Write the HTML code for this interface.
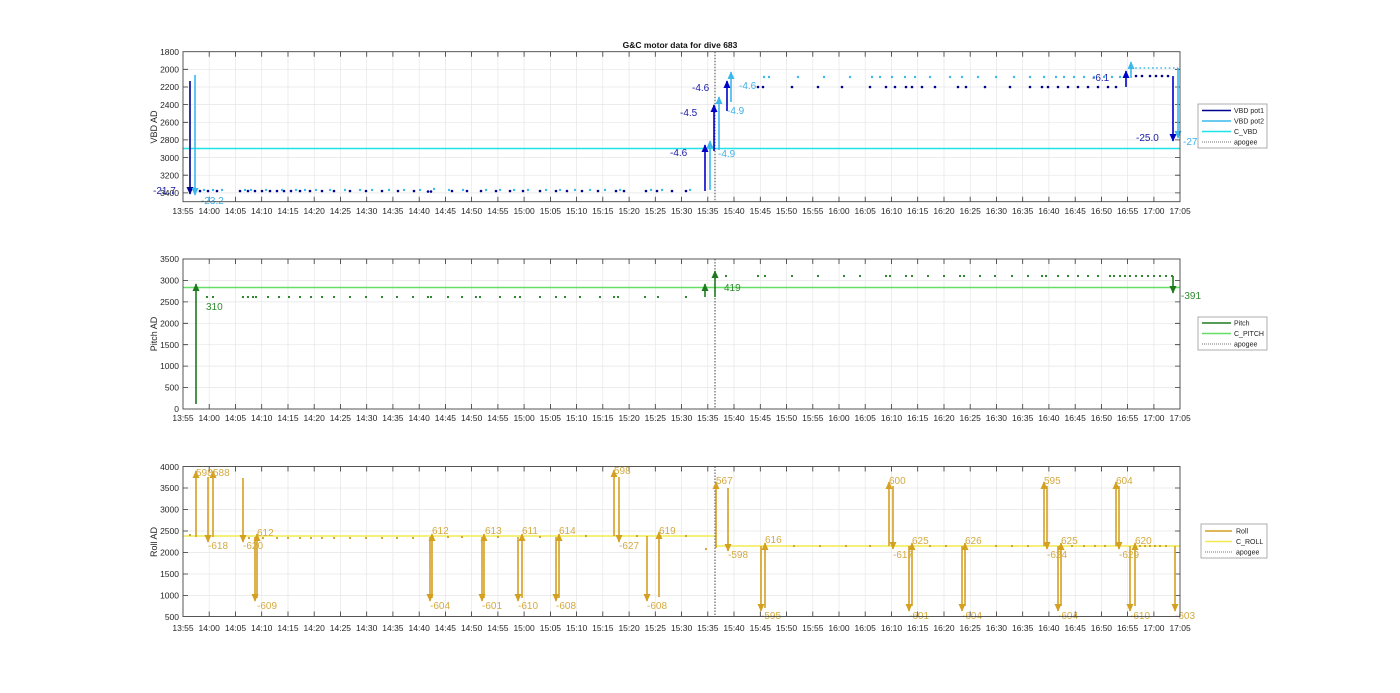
<!DOCTYPE html>
<html><head><meta charset="utf-8"><style>
html,body{margin:0;padding:0;background:#fff;width:1400px;height:693px;overflow:hidden}
svg{display:block;font-family:"Liberation Sans",sans-serif}
</style></head><body>
<svg width="1400" height="693" viewBox="0 0 1400 693" xmlns="http://www.w3.org/2000/svg">
<defs>
<marker id="mb" viewBox="0 0 10 10" refX="9" refY="5" markerWidth="5" markerHeight="4.5" orient="auto" preserveAspectRatio="none"><path d="M0 0L10 5L0 10z" fill="#0000c8"/></marker>
<marker id="mk" viewBox="0 0 10 10" refX="9" refY="5" markerWidth="5" markerHeight="4.5" orient="auto" preserveAspectRatio="none"><path d="M0 0L10 5L0 10z" fill="#000090"/></marker>
<marker id="ml" viewBox="0 0 10 10" refX="9" refY="5" markerWidth="5" markerHeight="4.5" orient="auto" preserveAspectRatio="none"><path d="M0 0L10 5L0 10z" fill="#3ab8ec"/></marker>
<marker id="mg" viewBox="0 0 10 10" refX="9" refY="5" markerWidth="5" markerHeight="4.5" orient="auto" preserveAspectRatio="none"><path d="M0 0L10 5L0 10z" fill="#1e7a1e"/></marker>
<marker id="my" viewBox="0 0 10 10" refX="9" refY="5" markerWidth="5" markerHeight="4.5" orient="auto" preserveAspectRatio="none"><path d="M0 0L10 5L0 10z" fill="#d4a020"/></marker>
<g id="vg"><path d="M209.2 0v150M235.5 0v150M261.7 0v150M288 0v150M314.2 0v150M340.4 0v150M366.7 0v150M392.9 0v150M419.2 0v150M445.4 0v150M471.6 0v150M497.9 0v150M524.1 0v150M550.4 0v150M576.6 0v150M602.8 0v150M629.1 0v150M655.3 0v150M681.6 0v150M707.8 0v150M734 0v150M760.3 0v150M786.5 0v150M812.8 0v150M839 0v150M865.2 0v150M891.5 0v150M917.7 0v150M944 0v150M970.2 0v150M996.4 0v150M1022.7 0v150M1048.9 0v150M1075.2 0v150M1101.4 0v150M1127.6 0v150M1153.9 0v150" stroke="#e6e6e6" stroke-width="0.7"/>
<path d="M209.2 0v5M235.5 0v5M261.7 0v5M288 0v5M314.2 0v5M340.4 0v5M366.7 0v5M392.9 0v5M419.2 0v5M445.4 0v5M471.6 0v5M497.9 0v5M524.1 0v5M550.4 0v5M576.6 0v5M602.8 0v5M629.1 0v5M655.3 0v5M681.6 0v5M707.8 0v5M734 0v5M760.3 0v5M786.5 0v5M812.8 0v5M839 0v5M865.2 0v5M891.5 0v5M917.7 0v5M944 0v5M970.2 0v5M996.4 0v5M1022.7 0v5M1048.9 0v5M1075.2 0v5M1101.4 0v5M1127.6 0v5M1153.9 0v5" stroke="#333" stroke-width="0.8"/>
<path d="M209.2 150v-5M235.5 150v-5M261.7 150v-5M288 150v-5M314.2 150v-5M340.4 150v-5M366.7 150v-5M392.9 150v-5M419.2 150v-5M445.4 150v-5M471.6 150v-5M497.9 150v-5M524.1 150v-5M550.4 150v-5M576.6 150v-5M602.8 150v-5M629.1 150v-5M655.3 150v-5M681.6 150v-5M707.8 150v-5M734 150v-5M760.3 150v-5M786.5 150v-5M812.8 150v-5M839 150v-5M865.2 150v-5M891.5 150v-5M917.7 150v-5M944 150v-5M970.2 150v-5M996.4 150v-5M1022.7 150v-5M1048.9 150v-5M1075.2 150v-5M1101.4 150v-5M1127.6 150v-5M1153.9 150v-5" stroke="#333" stroke-width="0.8"/>
</g>
</defs>
<text x="680" y="48" font-size="8.5" font-weight="bold" text-anchor="middle" fill="#111">G&amp;C motor data for dive 683</text>

<!-- PLOT 1 -->
<use href="#vg" transform="translate(0,51.7)"/>
<g stroke="#e6e6e6" stroke-width="0.7"><path d="M183 69.3H1180M183 87H1180M183 104.6H1180M183 122.3H1180M183 139.9H1180M183 157.6H1180M183 175.2H1180M183 192.9H1180"/></g>
<g stroke="#333" stroke-width="0.8"><path d="M183 69.3h5M183 87h5M183 104.6h5M183 122.3h5M183 139.9h5M183 157.6h5M183 175.2h5M183 192.9h5M1180 69.3h-5M1180 87h-5M1180 104.6h-5M1180 122.3h-5M1180 139.9h-5M1180 157.6h-5M1180 175.2h-5M1180 192.9h-5"/></g>
<line x1="183" y1="148.5" x2="1180" y2="148.5" stroke="#1ee4ea" stroke-width="1.5"/>
<line x1="715" y1="51.7" x2="715" y2="201.7" stroke="#333" stroke-width="0.9" stroke-dasharray="1.5 1.5"/>
<path stroke="#000090" stroke-width="2.6" stroke-linecap="round" d="M200 191h0M208 191h0M217 191h0M240 191h0M248 191h0M255 191h0M262 191h0M270 191h0M277 191h0M284 191h0M291 191h0M300 191h0M310 191h0M322 191h0M334 191h0M350 191h0M366 191h0M382 191h0M398 191h0M414 191h0M428 191.5h0M431 191.5h0M452 191h0M467 191h0M481 191h0M496 191h0M510 191h0M523 191h0M540 191h0M556 191h0M567 191h0M582 191h0M598 191h0M616 191h0M624 191h0M646 191h0M657 191h0M672 191h0M686 191h0M758 87h0M763 87h0M792 87h0M818 87h0M842 87h0M870 87h0M886 87h0M895 87h0M906 87h0M912 87h0M922 87h0M935 87h0M958 87h0M966 87h0M985 87h0M1010 87h0M1030 87h0M1042 87h0M1048 87h0M1058 87h0M1068 87h0M1078 87h0M1088 87h0M1098 87h0M1108 87h0M1116 87h0M1136 76h0M1142 76h0M1150 76h0M1156 76h0M1162 76h0M1168 76h0"/>
<path stroke="#3ab8ec" stroke-width="2.4" stroke-linecap="round" d="M204 190h0M213 190h0M222 190h0M245 190h0M251 190h0M266 190h0M282 190h0M296 190h0M305 190h0M316 190h0M330 190h0M345 190h0M360 190h0M372 190h0M389 190h0M404 190h0M420 190h0M434 189h0M449 190h0M463 190h0M486 190h0M500 190h0M514 190h0M528 190h0M546 190h0M560 190h0M575 190h0M590 190h0M605 190h0M620 190h0M651 190h0M662 190h0M690 190h0M764 77h0M769 77h0M798 77h0M824 77h0M850 77h0M872 77h0M880 77h0M892 77h0M905 77h0M915 77h0M930 77h0M950 77h0M962 77h0M978 77h0M996 77h0M1014 77h0M1030 77h0M1044 77h0M1056 77h0M1064 77h0M1074 77h0M1084 77h0M1094 77h0M1104 77h0M1112 77h0M1120 77h0"/>
<path d="M1131 68H1178" stroke="#3ab8ec" stroke-width="1.6" stroke-dasharray="1.6 2.6"/>
<g fill="none" stroke-width="1.6">
<line x1="190" y1="81" x2="190" y2="194" stroke="#000090" marker-end="url(#mk)"/>
<line x1="195" y1="75" x2="195" y2="195" stroke="#3ab8ec" marker-end="url(#ml)"/>
<line x1="705" y1="191" x2="705" y2="145" stroke="#0000c8" marker-end="url(#mb)"/>
<line x1="710" y1="190" x2="710" y2="141" stroke="#3ab8ec" marker-end="url(#ml)"/>
<line x1="714" y1="151" x2="714" y2="105" stroke="#0000c8" marker-end="url(#mb)"/>
<line x1="719" y1="150" x2="719" y2="97" stroke="#3ab8ec" marker-end="url(#ml)"/>
<line x1="727" y1="111" x2="727" y2="81" stroke="#0000c8" marker-end="url(#mb)"/>
<line x1="731" y1="102" x2="731" y2="72" stroke="#3ab8ec" marker-end="url(#ml)"/>
<line x1="1126" y1="87" x2="1126" y2="71" stroke="#0000c8" marker-end="url(#mb)"/>
<line x1="1131" y1="78" x2="1131" y2="62" stroke="#3ab8ec" marker-end="url(#ml)"/>
<line x1="1173" y1="76" x2="1173" y2="141" stroke="#0000c8" marker-end="url(#mb)"/>
<line x1="1178" y1="68" x2="1178" y2="138" stroke="#3ab8ec" marker-end="url(#ml)"/>
</g>
<g font-size="10" fill="#1a1aa8"><text x="153" y="194">-21.7</text><text x="670" y="156">-4.6</text><text x="680" y="116">-4.5</text><text x="692" y="91">-4.6</text><text x="1092" y="81">-6.1</text><text x="1136" y="141">-25.0</text></g>
<g font-size="10" fill="#40b0e8"><text x="201" y="204">-23.2</text><text x="718" y="157">-4.9</text><text x="727" y="114">-4.9</text><text x="739" y="89">-4.6</text><text x="1183" y="145">-27</text></g>
<rect x="183" y="51.7" width="997" height="150" fill="none" stroke="#444" stroke-width="0.9"/>
<g font-size="8.5" fill="#262626" text-anchor="end"><text x="179" y="55">1800</text><text x="179" y="72.5">2000</text><text x="179" y="90">2200</text><text x="179" y="108">2400</text><text x="179" y="125.5">2600</text><text x="179" y="143">2800</text><text x="179" y="161">3000</text><text x="179" y="178.5">3200</text><text x="179" y="196">3400</text></g>
<text transform="translate(157,127) rotate(-90)" font-size="9" fill="#262626" text-anchor="middle">VBD AD</text>
<g font-size="8.5" fill="#262626" text-anchor="middle"><text x="183" y="214">13:55</text><text x="209.2" y="214">14:00</text><text x="235.5" y="214">14:05</text><text x="261.7" y="214">14:10</text><text x="288" y="214">14:15</text><text x="314.2" y="214">14:20</text><text x="340.4" y="214">14:25</text><text x="366.7" y="214">14:30</text><text x="392.9" y="214">14:35</text><text x="419.2" y="214">14:40</text><text x="445.4" y="214">14:45</text><text x="471.6" y="214">14:50</text><text x="497.9" y="214">14:55</text><text x="524.1" y="214">15:00</text><text x="550.4" y="214">15:05</text><text x="576.6" y="214">15:10</text><text x="602.8" y="214">15:15</text><text x="629.1" y="214">15:20</text><text x="655.3" y="214">15:25</text><text x="681.6" y="214">15:30</text><text x="707.8" y="214">15:35</text><text x="734" y="214">15:40</text><text x="760.3" y="214">15:45</text><text x="786.5" y="214">15:50</text><text x="812.8" y="214">15:55</text><text x="839" y="214">16:00</text><text x="865.2" y="214">16:05</text><text x="891.5" y="214">16:10</text><text x="917.7" y="214">16:15</text><text x="944" y="214">16:20</text><text x="970.2" y="214">16:25</text><text x="996.4" y="214">16:30</text><text x="1022.7" y="214">16:35</text><text x="1048.9" y="214">16:40</text><text x="1075.2" y="214">16:45</text><text x="1101.4" y="214">16:50</text><text x="1127.6" y="214">16:55</text><text x="1153.9" y="214">17:00</text><text x="1180.1" y="214">17:05</text></g>
<rect x="1198" y="104" width="69" height="44" fill="#fff" stroke="#999" stroke-width="0.8"/>
<line x1="1202" y1="110.5" x2="1231" y2="110.5" stroke="#000090" stroke-width="1.5"/>
<line x1="1202" y1="121" x2="1231" y2="121" stroke="#3ab8ec" stroke-width="1.5"/>
<line x1="1202" y1="131.5" x2="1231" y2="131.5" stroke="#1ee4ea" stroke-width="1.5"/>
<line x1="1202" y1="142" x2="1231" y2="142" stroke="#444" stroke-width="0.8" stroke-dasharray="1 1"/>
<g font-size="7" fill="#222"><text x="1234" y="113">VBD pot1</text><text x="1234" y="123.5">VBD pot2</text><text x="1234" y="134">C_VBD</text><text x="1234" y="144.5">apogee</text></g>

<!-- PLOT 2 -->
<use href="#vg" transform="translate(0,259)"/>
<g stroke="#e6e6e6" stroke-width="0.7"><path d="M183 280.4H1180M183 301.9H1180M183 323.3H1180M183 344.7H1180M183 366.1H1180M183 387.6H1180"/></g>
<g stroke="#333" stroke-width="0.8"><path d="M183 280.4h5M183 301.9h5M183 323.3h5M183 344.7h5M183 366.1h5M183 387.6h5M1180 280.4h-5M1180 301.9h-5M1180 323.3h-5M1180 344.7h-5M1180 366.1h-5M1180 387.6h-5"/></g>
<line x1="183" y1="287.5" x2="1180" y2="287.5" stroke="#66dd66" stroke-width="1.5"/>
<line x1="715" y1="259" x2="715" y2="409" stroke="#333" stroke-width="0.9" stroke-dasharray="1.5 1.5"/>
<path stroke="#1e7a1e" stroke-width="2.2" stroke-linecap="round" d="M207 297h0M213 297h0M243 297h0M248 297h0M253 297h0M256 297h0M268 297h0M279 297h0M289 297h0M300 297h0M311 297h0M322 297h0M334 297h0M350 297h0M366 297h0M382 297h0M397 297h0M413 297h0M428 297h0M431 297h0M448 297h0M462 297h0M476 297h0M480 297h0M500 297h0M515 297h0M520 297h0M540 297h0M556 297h0M565 297h0M580 297h0M600 297h0M614 297h0M618 297h0M645 297h0M658 297h0M686 297h0M726 276h0M758 276h0M765 276h0M792 276h0M818 276h0M844 276h0M860 276h0M886 276h0M890 276h0M906 276h0M912 276h0M928 276h0M944 276h0M960 276h0M964 276h0M980 276h0M995 276h0M1012 276h0M1028 276h0M1042 276h0M1046 276h0M1058 276h0M1068 276h0M1078 276h0M1088 276h0M1098 276h0M1110 276h0M1114 276h0M1120 276h0M1125 276h0M1130 276h0M1136 276h0M1142 276h0M1148 276h0M1154 276h0M1160 276h0M1166 276h0M1172 276h0"/>
<g fill="none" stroke="#1e7a1e" stroke-width="1.6">
<line x1="196" y1="404" x2="196" y2="284" marker-end="url(#mg)"/>
<line x1="705" y1="297" x2="705" y2="284" marker-end="url(#mg)"/>
<line x1="715" y1="297" x2="715" y2="271" marker-end="url(#mg)"/>
<line x1="1173" y1="276" x2="1173" y2="293" marker-end="url(#mg)"/>
</g>
<g font-size="10" fill="#2e8b2e"><text x="206" y="310">310</text><text x="724" y="291">419</text><text x="1181" y="299">-391</text></g>
<rect x="183" y="259" width="997" height="150" fill="none" stroke="#444" stroke-width="0.9"/>
<g font-size="8.5" fill="#262626" text-anchor="end"><text x="179" y="262">3500</text><text x="179" y="283.5">3000</text><text x="179" y="305">2500</text><text x="179" y="326.5">2000</text><text x="179" y="348">1500</text><text x="179" y="369">1000</text><text x="179" y="390.5">500</text><text x="179" y="412">0</text></g>
<text transform="translate(157,334) rotate(-90)" font-size="9" fill="#262626" text-anchor="middle">Pitch AD</text>
<g font-size="8.5" fill="#262626" text-anchor="middle"><text x="183" y="421">13:55</text><text x="209.2" y="421">14:00</text><text x="235.5" y="421">14:05</text><text x="261.7" y="421">14:10</text><text x="288" y="421">14:15</text><text x="314.2" y="421">14:20</text><text x="340.4" y="421">14:25</text><text x="366.7" y="421">14:30</text><text x="392.9" y="421">14:35</text><text x="419.2" y="421">14:40</text><text x="445.4" y="421">14:45</text><text x="471.6" y="421">14:50</text><text x="497.9" y="421">14:55</text><text x="524.1" y="421">15:00</text><text x="550.4" y="421">15:05</text><text x="576.6" y="421">15:10</text><text x="602.8" y="421">15:15</text><text x="629.1" y="421">15:20</text><text x="655.3" y="421">15:25</text><text x="681.6" y="421">15:30</text><text x="707.8" y="421">15:35</text><text x="734" y="421">15:40</text><text x="760.3" y="421">15:45</text><text x="786.5" y="421">15:50</text><text x="812.8" y="421">15:55</text><text x="839" y="421">16:00</text><text x="865.2" y="421">16:05</text><text x="891.5" y="421">16:10</text><text x="917.7" y="421">16:15</text><text x="944" y="421">16:20</text><text x="970.2" y="421">16:25</text><text x="996.4" y="421">16:30</text><text x="1022.7" y="421">16:35</text><text x="1048.9" y="421">16:40</text><text x="1075.2" y="421">16:45</text><text x="1101.4" y="421">16:50</text><text x="1127.6" y="421">16:55</text><text x="1153.9" y="421">17:00</text><text x="1180.1" y="421">17:05</text></g>
<rect x="1198" y="317" width="69" height="33" fill="#fff" stroke="#999" stroke-width="0.8"/>
<line x1="1202" y1="323" x2="1231" y2="323" stroke="#1e7a1e" stroke-width="1.5"/>
<line x1="1202" y1="333.5" x2="1231" y2="333.5" stroke="#66dd66" stroke-width="1.5"/>
<line x1="1202" y1="344" x2="1231" y2="344" stroke="#444" stroke-width="0.8" stroke-dasharray="1 1"/>
<g font-size="7" fill="#222"><text x="1234" y="325.5">Pitch</text><text x="1234" y="336">C_PITCH</text><text x="1234" y="346.5">apogee</text></g>

<!-- PLOT 3 -->
<use href="#vg" transform="translate(0,466.5)"/>
<g stroke="#e6e6e6" stroke-width="0.7"><path d="M183 488H1180M183 509.5H1180M183 531H1180M183 552.5H1180M183 574H1180M183 595.5H1180"/></g>
<g stroke="#333" stroke-width="0.8"><path d="M183 488h5M183 509.5h5M183 531h5M183 552.5h5M183 574h5M183 595.5h5M1180 488h-5M1180 509.5h-5M1180 531h-5M1180 552.5h-5M1180 574h-5M1180 595.5h-5"/></g>
<line x1="183" y1="536" x2="715" y2="536" stroke="#f2ea50" stroke-width="1.5"/>
<line x1="715" y1="546" x2="1180" y2="546" stroke="#f2ea50" stroke-width="1.5"/>
<line x1="715" y1="466.5" x2="715" y2="616.5" stroke="#333" stroke-width="0.9" stroke-dasharray="1.5 1.5"/>
<path stroke="#c8a030" stroke-width="2.2" stroke-linecap="round" d="M190 535h0M249 538h0M263 538h0M277 538h0M288 538h0M300 538h0M311 538h0M322 538h0M334 538h0M350 538h0M366 538h0M382 538h0M397 538h0M413 538h0M448 537h0M462 537h0M498 537h0M540 537h0M586 536h0M637 536h0M686 536h0M706 549h0M794 546h0M820 546h0M846 546h0M870 546h0M930 546h0M946 546h0M996 546h0M1012 546h0M1028 546h0M1072 546h0M1084 546h0M1095 546h0M1105 546h0M1140 546h0M1145 546h0M1150 546h0M1155 546h0M1160 546h0M1166 546h0"/>
<g fill="none" stroke="#d4a020" stroke-width="1.6">
<line x1="196" y1="537" x2="196" y2="471" marker-end="url(#my)"/>
<line x1="208" y1="477" x2="208" y2="542" marker-end="url(#my)"/>
<line x1="213" y1="537" x2="213" y2="471" marker-end="url(#my)"/>
<line x1="243" y1="478" x2="243" y2="542" marker-end="url(#my)"/>
<line x1="255" y1="537" x2="255" y2="601" marker-end="url(#my)"/>
<line x1="257" y1="598" x2="257" y2="534" marker-end="url(#my)"/>
<line x1="430" y1="537" x2="430" y2="601" marker-end="url(#my)"/>
<line x1="432" y1="598" x2="432" y2="534" marker-end="url(#my)"/>
<line x1="482" y1="537" x2="482" y2="601" marker-end="url(#my)"/>
<line x1="484" y1="598" x2="484" y2="534" marker-end="url(#my)"/>
<line x1="518" y1="537" x2="518" y2="601" marker-end="url(#my)"/>
<line x1="522" y1="598" x2="522" y2="534" marker-end="url(#my)"/>
<line x1="556" y1="537" x2="556" y2="601" marker-end="url(#my)"/>
<line x1="559" y1="598" x2="559" y2="534" marker-end="url(#my)"/>
<line x1="614" y1="536" x2="614" y2="470" marker-end="url(#my)"/>
<line x1="619" y1="477" x2="619" y2="542" marker-end="url(#my)"/>
<line x1="647" y1="536" x2="647" y2="601" marker-end="url(#my)"/>
<line x1="659" y1="597" x2="659" y2="532" marker-end="url(#my)"/>
<line x1="716" y1="548" x2="716" y2="482" marker-end="url(#my)"/>
<line x1="728" y1="488" x2="728" y2="551" marker-end="url(#my)"/>
<line x1="761" y1="546" x2="761" y2="611" marker-end="url(#my)"/>
<line x1="765" y1="608" x2="765" y2="543" marker-end="url(#my)"/>
<line x1="889" y1="546" x2="889" y2="482" marker-end="url(#my)"/>
<line x1="893" y1="486" x2="893" y2="549" marker-end="url(#my)"/>
<line x1="909" y1="546" x2="909" y2="611" marker-end="url(#my)"/>
<line x1="912" y1="606" x2="912" y2="543" marker-end="url(#my)"/>
<line x1="962" y1="546" x2="962" y2="611" marker-end="url(#my)"/>
<line x1="965" y1="606" x2="965" y2="543" marker-end="url(#my)"/>
<line x1="1044" y1="546" x2="1044" y2="482" marker-end="url(#my)"/>
<line x1="1047" y1="486" x2="1047" y2="549" marker-end="url(#my)"/>
<line x1="1058" y1="546" x2="1058" y2="611" marker-end="url(#my)"/>
<line x1="1061" y1="606" x2="1061" y2="543" marker-end="url(#my)"/>
<line x1="1116" y1="546" x2="1116" y2="482" marker-end="url(#my)"/>
<line x1="1119" y1="486" x2="1119" y2="549" marker-end="url(#my)"/>
<line x1="1130" y1="546" x2="1130" y2="611" marker-end="url(#my)"/>
<line x1="1135" y1="606" x2="1135" y2="543" marker-end="url(#my)"/>
<line x1="1175" y1="546" x2="1175" y2="611" marker-end="url(#my)"/>
</g>
<g font-size="10" fill="#d4aa40"><text x="196" y="476">598</text><text x="213" y="476">588</text><text x="208" y="549">-618</text><text x="243" y="549">-620</text><text x="257" y="536">612</text><text x="257" y="609">-609</text><text x="432" y="534">612</text><text x="430" y="609">-604</text><text x="485" y="534">613</text><text x="482" y="609">-601</text><text x="522" y="534">611</text><text x="518" y="609">-610</text><text x="559" y="534">614</text><text x="556" y="609">-608</text><text x="614" y="474">598</text><text x="619" y="549">-627</text><text x="659" y="534">619</text><text x="647" y="609">-608</text><text x="716" y="484">567</text><text x="728" y="558">-598</text><text x="765" y="543">616</text><text x="761" y="619">-595</text><text x="889" y="484">600</text><text x="893" y="558">-617</text><text x="912" y="544">625</text><text x="909" y="619">-601</text><text x="965" y="544">626</text><text x="962" y="619">-604</text><text x="1044" y="484">595</text><text x="1047" y="558">-624</text><text x="1061" y="544">625</text><text x="1058" y="619">-604</text><text x="1116" y="484">604</text><text x="1119" y="558">-629</text><text x="1135" y="544">620</text><text x="1130" y="619">-610</text><text x="1175" y="619">-603</text></g>
<rect x="183" y="466.5" width="997" height="150" fill="none" stroke="#444" stroke-width="0.9"/>
<g font-size="8.5" fill="#262626" text-anchor="end"><text x="179" y="470">4000</text><text x="179" y="491">3500</text><text x="179" y="512.5">3000</text><text x="179" y="534">2500</text><text x="179" y="555.5">2000</text><text x="179" y="577">1500</text><text x="179" y="598.5">1000</text><text x="179" y="620">500</text></g>
<text transform="translate(157,542) rotate(-90)" font-size="9" fill="#262626" text-anchor="middle">Roll AD</text>
<g font-size="8.5" fill="#262626" text-anchor="middle"><text x="183" y="631">13:55</text><text x="209.2" y="631">14:00</text><text x="235.5" y="631">14:05</text><text x="261.7" y="631">14:10</text><text x="288" y="631">14:15</text><text x="314.2" y="631">14:20</text><text x="340.4" y="631">14:25</text><text x="366.7" y="631">14:30</text><text x="392.9" y="631">14:35</text><text x="419.2" y="631">14:40</text><text x="445.4" y="631">14:45</text><text x="471.6" y="631">14:50</text><text x="497.9" y="631">14:55</text><text x="524.1" y="631">15:00</text><text x="550.4" y="631">15:05</text><text x="576.6" y="631">15:10</text><text x="602.8" y="631">15:15</text><text x="629.1" y="631">15:20</text><text x="655.3" y="631">15:25</text><text x="681.6" y="631">15:30</text><text x="707.8" y="631">15:35</text><text x="734" y="631">15:40</text><text x="760.3" y="631">15:45</text><text x="786.5" y="631">15:50</text><text x="812.8" y="631">15:55</text><text x="839" y="631">16:00</text><text x="865.2" y="631">16:05</text><text x="891.5" y="631">16:10</text><text x="917.7" y="631">16:15</text><text x="944" y="631">16:20</text><text x="970.2" y="631">16:25</text><text x="996.4" y="631">16:30</text><text x="1022.7" y="631">16:35</text><text x="1048.9" y="631">16:40</text><text x="1075.2" y="631">16:45</text><text x="1101.4" y="631">16:50</text><text x="1127.6" y="631">16:55</text><text x="1153.9" y="631">17:00</text><text x="1180.1" y="631">17:05</text></g>
<rect x="1201" y="524" width="66" height="34" fill="#fff" stroke="#999" stroke-width="0.8"/>
<line x1="1205" y1="531" x2="1232" y2="531" stroke="#d4a020" stroke-width="1.5"/>
<line x1="1205" y1="541.5" x2="1232" y2="541.5" stroke="#f2ea50" stroke-width="1.5"/>
<line x1="1205" y1="552" x2="1232" y2="552" stroke="#444" stroke-width="0.8" stroke-dasharray="1 1"/>
<g font-size="7" fill="#222"><text x="1236" y="533.5">Roll</text><text x="1236" y="544">C_ROLL</text><text x="1236" y="554.5">apogee</text></g>
</svg>
</body></html>
